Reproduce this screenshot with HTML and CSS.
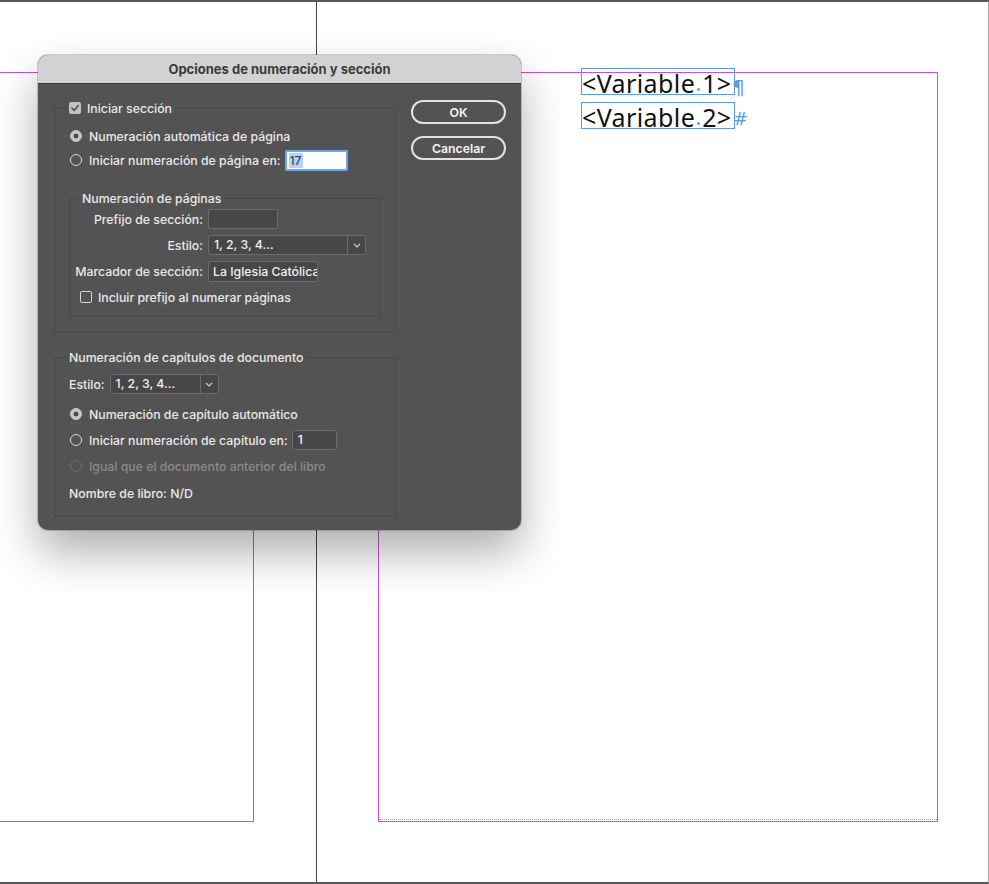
FILE: index.html
```html
<!DOCTYPE html>
<html lang="es">
<head>
    <meta charset="utf-8">
    <title>Opciones de numeración y sección</title>
    <link rel="stylesheet" href="styles.css">
</head>
<body>
    <div class="canvas">
        <!-- pasteboard: spread, margins and text frames -->
        <div class="spine"></div>
        <div class="margin-guide left-page"></div>
        <div class="margin-guide right-page"><div class="baseline"></div></div>

        <div class="text-frame frame-1">&lt;Variable<span class="space-mark"></span>1&gt;</div>
        <span class="frame-mark mark-1">¶</span>
        <div class="text-frame frame-2">&lt;Variable<span class="space-mark"></span>2&gt;</div>
        <span class="frame-mark mark-2">#</span>

        <!-- dialog -->
        <div class="dialog">
            <div class="dialog-title">Opciones de numeración y sección</div>
            <div class="dialog-body">
                <div class="dialog-main">
                    <fieldset class="group section-group">
                        <legend>
                            <span class="check checked">
                                <svg width="10" height="10" viewBox="0 0 10 10"><path d="M2 5.2 L4.2 7.4 L8.2 2.6" fill="none" stroke="#4a4a4a" stroke-width="1.6" stroke-linecap="round" stroke-linejoin="round"/></svg>
                            </span>
                            Iniciar sección
                        </legend>
                        <div class="row first">
                            <span class="radio on"></span>Numeración automática de página
                        </div>
                        <div class="row">
                            <span class="radio"></span>Iniciar numeración de página en:
                            <span class="field focus start-page"><span class="selected-text">17</span></span>
                        </div>

                        <fieldset class="group inner-group">
                            <legend>Numeración de páginas</legend>
                            <div class="form-grid">
                                <span class="lbl">Prefijo de sección:</span>
                                <span class="field prefix"></span>

                                <span class="lbl">Estilo:</span>
                                <span class="select page-style">
                                    <span class="select-value">1, 2, 3, 4...</span>
                                    <span class="select-arrow"><svg width="8" height="5" viewBox="0 0 8 5"><path d="M1 1 L4 4 L7 1" fill="none" stroke="#cfcfcf" stroke-width="1.1"/></svg></span>
                                </span>

                                <span class="lbl">Marcador de sección:</span>
                                <span class="field marker">La Iglesia Católica</span>
                            </div>
                            <div class="row check-row">
                                <span class="check"></span>Incluir prefijo al numerar páginas
                            </div>
                        </fieldset>
                    </fieldset>

                    <fieldset class="group chapter-group">
                        <legend>Numeración de capítulos de documento</legend>
                        <div class="row style-row">
                            <span class="lbl">Estilo:</span>
                            <span class="select chapter-style">
                                <span class="select-value">1, 2, 3, 4...</span>
                                <span class="select-arrow"><svg width="8" height="5" viewBox="0 0 8 5"><path d="M1 1 L4 4 L7 1" fill="none" stroke="#cfcfcf" stroke-width="1.1"/></svg></span>
                            </span>
                        </div>
                        <div class="row">
                            <span class="radio on"></span>Numeración de capítulo automático
                        </div>
                        <div class="row">
                            <span class="radio"></span>Iniciar numeración de capítulo en:
                            <span class="field chapter-start">1</span>
                        </div>
                        <div class="row disabled">
                            <span class="radio"></span>Igual que el documento anterior del libro
                        </div>
                        <div class="row book-name">Nombre de libro: N/D</div>
                    </fieldset>
                </div>

                <div class="dialog-buttons">
                    <button class="btn">OK</button>
                    <button class="btn">Cancelar</button>
                </div>
            </div>
        </div>
    </div>
</body>
</html>
```

FILE: styles.css
```css
/* page canvas */

body {
    margin: 0;
    background-color: #fff;
    overflow: hidden;
}

.canvas {
    position: relative;
    width: 988px;
    height: 880px;
    border-top: 2px solid #555;
    border-bottom: 2px solid #555;
    border-right: 1px solid #a8a8a8;
    background-color: #fff;
}

.spine {
    position: absolute;
    left: 316px;
    top: 0;
    bottom: 0;
    width: 1px;
    background-color: #444;
}

.margin-guide {
    position: absolute;
    top: 70px;
    height: 748px;
    border: 1px solid #c352d9;
}

.left-page {
    left: -2px;
    width: 254px;
}

.right-page {
    left: 378px;
    width: 558px;
}

.baseline {
    position: absolute;
    left: 0;
    right: 0;
    bottom: 1px;
    border-bottom: 1px dotted #9a9a9a;
}

.text-frame {
    position: absolute;
    left: 581px;
    width: 152px;
    height: 25px;
    border: 1px solid #5d9be0;
    font-family: "Noto Sans", sans-serif;
    font-size: 25px;
    line-height: 28px;
    letter-spacing: 0.4px;
    color: #111;
    white-space: nowrap;
}

.frame-1 {
    top: 66px;
}

.frame-2 {
    top: 100px;
}

.space-mark {
    display: inline-block;
    width: 7px;
    height: 3px;
    vertical-align: 2px;
    background: radial-gradient(circle, #5d9be0 0 1px, transparent 1.6px);
}

.frame-mark {
    position: absolute;
    font-family: "DejaVu Sans", sans-serif;
    color: #5d9be0;
}

.mark-1 {
    left: 732px;
    top: 73px;
    font-size: 20px;
}

.mark-2 {
    left: 733px;
    top: 106px;
    font-size: 18px;
    font-style: italic;
}

/* dialog */

.dialog {
    position: absolute;
    left: 38px;
    top: 53px;
    width: 483px;
    height: 475px;
    border-radius: 10px;
    background-color: #535353;
    box-shadow: 0 22px 45px rgba(0, 0, 0, 0.32), 0 0 0 1px rgba(0, 0, 0, 0.18);
    font-family: Inter, "Noto Sans", sans-serif;
    font-size: 12.3px;
    font-weight: 500;
    color: #e8e8e8;
    overflow: hidden;
}

.dialog-title {
    height: 28px;
    line-height: 28px;
    text-align: center;
    background-color: #d2d2d2;
    border-bottom: 1px solid #343434;
    color: #3b3b3b;
    font-size: 13px;
    font-weight: 700;
}

.dialog-body {
    display: flex;
    gap: 15px;
    padding: 16px 15px 0 16px;
}

.dialog-main {
    width: 342px;
}

.dialog-buttons {
    display: flex;
    flex-direction: column;
    gap: 12px;
}

.btn {
    width: 95px;
    height: 24px;
    border: 2px solid #e2e2e2;
    border-radius: 12px;
    background-color: transparent;
    color: #f2f2f2;
    font-family: Inter, "Noto Sans", sans-serif;
    font-size: 12.3px;
    font-weight: 600;
    cursor: pointer;
}

/* groups */

.group {
    margin: 0;
    padding: 0 15px 0 14px;
    border: 1px solid #474747;
    min-inline-size: 0;
}

.group legend {
    display: flex;
    align-items: center;
    gap: 6px;
    height: 16px;
    padding: 0 3px;
    margin-left: -3px;
}

.section-group {
    padding-bottom: 14px;
}

.inner-group {
    margin-top: 18px;
    padding: 0 8px 6px 9px;
}

.inner-group legend {
    margin-left: 0;
}

.chapter-group {
    margin-top: 17px;
    padding-bottom: 10px;
}

.row {
    display: flex;
    align-items: center;
    height: 24px;
    white-space: nowrap;
}

.row.first {
    margin-top: 8px;
}

.chapter-group .row {
    height: 26px;
}

.chapter-group .style-row {
    margin-top: 6px;
    margin-bottom: 4px;
}

.row.disabled {
    color: #8a8a8a;
}

.row.book-name {
    margin-top: 1px;
}

/* controls */

.radio {
    width: 12px;
    height: 12px;
    margin: 0 7px 0 1px;
    border: 1px solid #d4d4d4;
    border-radius: 50%;
    box-sizing: border-box;
    flex: none;
}

.radio.on {
    background-color: #c6c6c6;
    border-color: #c6c6c6;
    background-image: radial-gradient(circle, #4b4b4b 0 2.2px, transparent 2.7px);
}

.row.disabled .radio {
    border-color: #707070;
}

.check {
    display: inline-flex;
    align-items: center;
    justify-content: center;
    width: 12px;
    height: 12px;
    border: 1px solid #d4d4d4;
    border-radius: 2px;
    box-sizing: border-box;
    flex: none;
}

.check.checked {
    background-color: #c2c2c2;
    border-color: #c2c2c2;
}

.check-row {
    height: 26px;
    padding-left: 1px;
}

.check-row .check {
    margin-right: 6px;
}

.field {
    display: inline-block;
    box-sizing: border-box;
    height: 20px;
    line-height: 18px;
    padding: 0 5px;
    border: 1px solid #6c6c6c;
    border-radius: 2px;
    background-color: #474747;
    color: #f0f0f0;
    overflow: hidden;
    white-space: nowrap;
    flex: none;
}

.field.focus {
    height: 21px;
    line-height: 17px;
    padding: 0 2px;
    border: 2px solid #6aa6ea;
    border-radius: 1px;
    background-color: #fff;
    color: #3a4a66;
}

.selected-text {
    background-color: #b5d4f6;
    padding: 0 1px;
}

.start-page {
    width: 63px;
    margin-left: 4px;
}

.prefix {
    width: 70px;
}

.marker {
    width: 110px;
    height: 21px;
    line-height: 19px;
    padding: 0 4px;
}

.chapter-start {
    width: 45px;
    margin-left: 4px;
}

.select {
    display: inline-flex;
    box-sizing: border-box;
    height: 20px;
    border: 1px solid #6c6c6c;
    border-radius: 3px;
    background-color: #474747;
    color: #f0f0f0;
    flex: none;
}

.select-value {
    flex: 1;
    line-height: 18px;
    padding-left: 5px;
}

.select-arrow {
    display: flex;
    align-items: center;
    justify-content: center;
    width: 17px;
    border-left: 1px solid #6c6c6c;
}

.page-style {
    width: 158px;
}

.chapter-style {
    width: 109px;
    margin-left: 5px;
}

.form-grid {
    display: grid;
    grid-template-columns: 124px auto;
    grid-auto-rows: 26px;
    column-gap: 5px;
    align-items: center;
    justify-items: start;
}

.form-grid .lbl {
    justify-self: end;
    white-space: nowrap;
}
```
